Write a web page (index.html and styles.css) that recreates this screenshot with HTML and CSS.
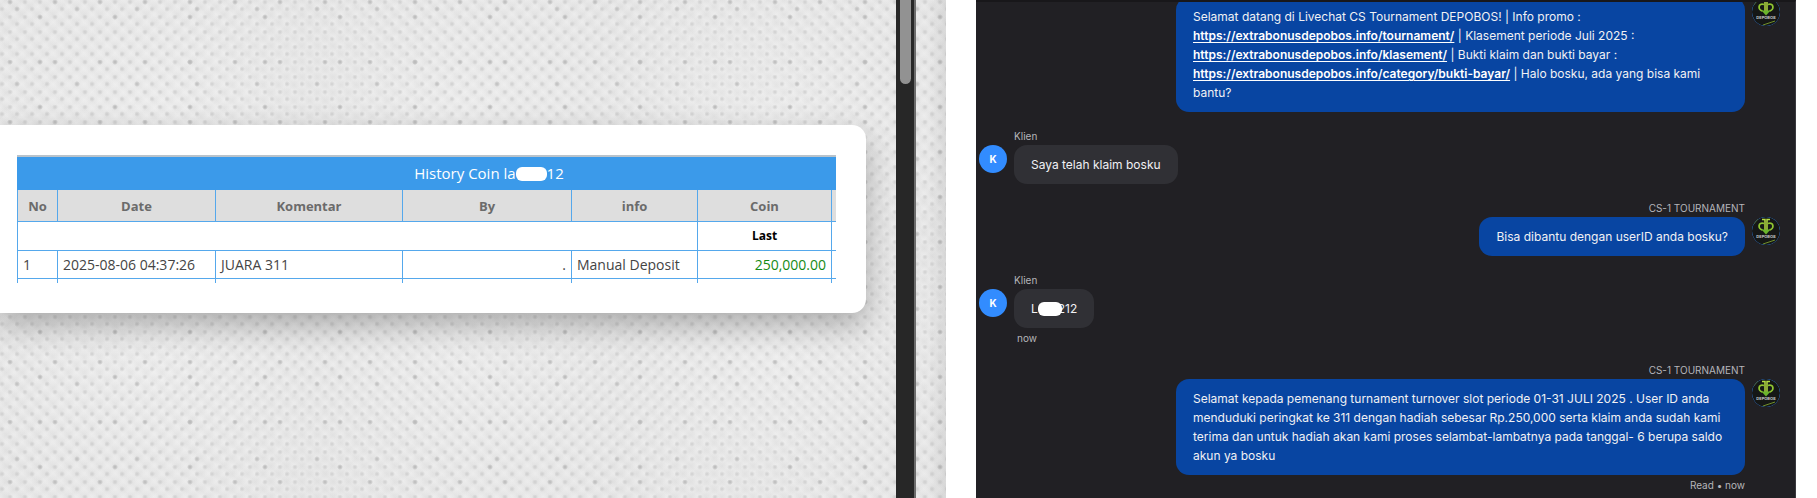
FILE: index.html
```html
<!DOCTYPE html>
<html lang="id">
<head>
<meta charset="utf-8">
<title>Livechat CS Tournament</title>
<link rel="stylesheet" href="styles.css">
</head>
<body>
<svg class="defs" aria-hidden="true">
  <symbol id="agent-logo" viewBox="0 0 28 28">
    <circle cx="14" cy="14" r="14" fill="#151716"/>
    <path d="M1.500 7 6 2M11 27l12-4" stroke="#71912a" stroke-width="1" fill="none"/>
    <path d="M10 2.500h3v11M18 2.500h-3v11" stroke="#b4dc43" stroke-width="1.500" fill="none"/>
    <path d="M12 6.500C6 4.500 5.500 12 10.500 13M16 6.500C22 4.500 22.500 12 17.500 13" stroke="#8fc531" stroke-width="1.800" fill="none"/>
    <path d="M9.500 12.500h9L14 17.500z" fill="#6bb52c"/>
  </symbol>
</svg>
<main class="page">
  <section class="history">
    <div class="history-body">
      <div class="card">
        <table class="coins">
          <colgroup>
            <col class="c-no"><col class="c-date"><col class="c-note"><col class="c-by"><col class="c-info"><col class="c-coin"><col class="c-end">
          </colgroup>
          <thead>
            <tr><th class="title" colspan="7">History Coin la<span class="mask mask-title"></span>12</th></tr>
            <tr class="heads"><th>No</th><th>Date</th><th>Komentar</th><th>By</th><th>info</th><th>Coin</th><th></th></tr>
          </thead>
          <tbody>
            <tr class="last"><td colspan="5"></td><th>Last</th><td></td></tr>
            <tr class="entry"><td>1</td><td>2025-08-06 04:37:26</td><td>JUARA 311</td><td class="right">.</td><td>Manual Deposit</td><td class="right amount">250,000.00</td><td></td></tr>
            <tr class="tail"><td></td><td></td><td></td><td></td><td></td><td></td><td></td></tr>
          </tbody>
        </table>
      </div>
    </div>
    <div class="track"><div class="thumb"></div></div>
    <div class="edge"></div>
  </section>
  <section class="chat">
    <div class="row agent">
      <div class="stack">
        <div class="bubble">Selamat datang di Livechat CS Tournament DEPOBOS! | Info promo :<br><a href="#tournament">https://extrabonusdepobos.info/tournament/</a> | Klasement periode Juli 2025 :<br><a href="#klasement">https://extrabonusdepobos.info/klasement/</a> | Bukti klaim dan bukti bayar :<br><a href="#bukti-bayar">https://extrabonusdepobos.info/category/bukti-bayar/</a> | Halo bosku, ada yang bisa kami bantu?</div>
      </div>
      <div class="avatar unnamed"><svg><use href="#agent-logo"/></svg><span class="brand">DEPOBOS</span></div>
    </div>
    <div class="row client">
      <div class="avatar">K</div>
      <div class="stack"><div class="name">Klien</div><div class="bubble">Saya telah klaim bosku</div></div>
    </div>
    <div class="row agent">
      <div class="stack"><div class="name">CS-1 TOURNAMENT</div><div class="bubble">Bisa dibantu dengan userID anda bosku?</div></div>
      <div class="avatar"><svg><use href="#agent-logo"/></svg><span class="brand">DEPOBOS</span></div>
    </div>
    <div class="row client">
      <div class="avatar">K</div>
      <div class="stack"><div class="name">Klien</div><div class="bubble">L<span class="mask mask-chat"></span>212</div><div class="status">now</div></div>
    </div>
    <div class="row agent">
      <div class="stack">
        <div class="name">CS-1 TOURNAMENT</div>
        <div class="bubble">Selamat kepada pemenang turnament turnover slot periode 01-31 JULI 2025 . User ID anda menduduki peringkat ke 311 dengan hadiah sebesar Rp.250,000 serta klaim anda sudah kami terima dan untuk hadiah akan kami proses selambat-lambatnya pada tanggal- 6 berupa saldo akun ya bosku</div>
        <div class="status">Read • now</div>
      </div>
      <div class="avatar"><svg><use href="#agent-logo"/></svg><span class="brand">DEPOBOS</span></div>
    </div>
  </section>
</main>
</body>
</html>
```
FILE: styles.css
```css
* { box-sizing: border-box; }
body { margin: 0; background: #fff; }
.defs { display: none; }
.page {
  display: grid;
  grid-template-columns: 946fr 820fr;
  column-gap: 30px;
  padding-right: 21px;
  height: 100vh;
  overflow: hidden;
}

/* coin history */
.history {
  display: flex;
  min-width: 0;
  background-color: #e7e7e7;
  background-image:
    radial-gradient(circle at 10px 2px, #bcbcbc 0, #bcbcbc00 3px),
    radial-gradient(circle at 40px 17px, #b8b8b8 0, #b8b8b800 3px),
    radial-gradient(circle at 17px 9px, #c0c0c0 0, #c0c0c000 3px),
    radial-gradient(circle at 10px 2px, #cecece 0, #cecece00 3px),
    radial-gradient(circle at 2px 9px, #cecece 0, #cecece00 3px),
    repeating-linear-gradient(45deg, #f0f0f060 0, #dcdcdc40 5px, #f0f0f060 11px),
    repeating-linear-gradient(-45deg, #f2f2f260 0, #dadada40 5px, #f2f2f260 11px),
    radial-gradient(ellipse at 50% 50%, #f4f4f480, #dcdcdc60);
  background-size: 45px 60px, 75px 45px, 60px 75px, 15px 15px, 15px 15px, auto, auto, 310px 240px;
  font-family: "Open Sans", "Noto Sans", sans-serif;
}
.history-body { flex: 1; min-width: 0; padding: 125px 30px 0 0; overflow: hidden; }
.card {
  padding: 30px 30px 30px 17px;
  background: #fff;
  border-radius: 0 14px 14px 0;
  box-shadow: 0 12px 30px #0004;
}
.coins {
  width: 100%;
  table-layout: fixed;
  border-collapse: separate;
  border-spacing: 0;
  border-top: 2px solid #b9c3cb;
  color: #444;
  font-size: 14px;
  line-height: 20px;
}
.c-no { width: 40px; }
.c-date { width: 158px; }
.c-note { width: 187px; }
.c-by { width: 169px; }
.c-info { width: 126px; }
.c-end { width: 5px; }
.coins th, .coins td { padding: 0 5px; border-left: 1px solid #55a8ec; border-bottom: 1px solid #55a8ec; text-align: left; white-space: nowrap; }
.coins tr > :last-child { padding: 0; }
.coins tr > .title { height: 33px; padding-left: 124px; border-color: #3b9aea; background: #3b9aea; color: #fff; font-size: 15px; font-weight: 400; text-align: center; }
.coins .heads th { height: 32px; background: #dedede; color: #6b6b6b; font-size: 13px; font-weight: 700; text-align: center; }
.last > * { height: 29px; }
.coins .last th { color: #000; font-size: 12px; text-align: center; }
.entry td { height: 28px; }
.tail td { height: 4px; border-bottom: 0; }
.coins .right { text-align: right; }
.coins .amount { color: #158a15; }
.mask { display: inline-block; height: 14px; background: #fff; border-radius: 6px; vertical-align: middle; }
.mask-title { width: 31px; margin: 0 0 2px; }
.mask-chat { width: 24px; margin: 0 -4px 2px 0; position: relative; }
.track { width: 18px; padding: 0 3px 0 4px; background: #272727; }
.thumb { height: 84px; background: #929292; border-radius: 0 0 6px 6px; }
.edge { width: 32px; border-left: 2px solid #6c6c6c; background: linear-gradient(90deg, #fff0 40%, #0001); }

/* live chat */
.chat {
  display: flex;
  flex-direction: column;
  justify-content: flex-end;
  gap: 16px;
  min-width: 0;
  overflow: hidden;
  padding: 0 15px 5px 3px;
  background: #212024;
  border-top: 2px solid #18171a;
  border-right: 1px solid #3a393e;
  color: #f1f1f4;
  font-family: Inter, sans-serif;
  font-size: 12px;
  line-height: 19px;
}
.row { display: flex; flex-shrink: 0; gap: 7px; }
.agent { justify-content: flex-end; }
.stack { display: flex; flex-direction: column; align-items: flex-start; max-width: 569px; }
.agent .stack { align-items: flex-end; }
.name { color: #b5b5ba; font-size: 10px; line-height: 17px; }
.bubble { padding: 10px 17px; border-radius: 13px; background: #303035; }
.agent .bubble { background: #0845a2; }
.bubble a { color: #fff; font-weight: 600; text-decoration: underline; text-underline-offset: 2px; }
.status { padding-top: 2px; color: #b5b5ba; font-size: 10px; line-height: 16px; }
.client .status { padding-left: 3px; }
.avatar {
  position: relative;
  flex: none;
  width: 28px;
  height: 28px;
  margin-top: 17px;
  overflow: hidden;
  border-radius: 50%;
  background: #328cff;
  color: #fff;
  font-size: 10px;
  font-weight: 700;
  line-height: 28px;
  text-align: center;
}
.avatar.unnamed { margin-top: 1px; }
.avatar svg { display: block; width: 28px; height: 28px; }
.brand { position: absolute; top: 16px; left: 0; width: 100%; color: #c8c8c8; font-size: 4px; line-height: 8px; }
```
